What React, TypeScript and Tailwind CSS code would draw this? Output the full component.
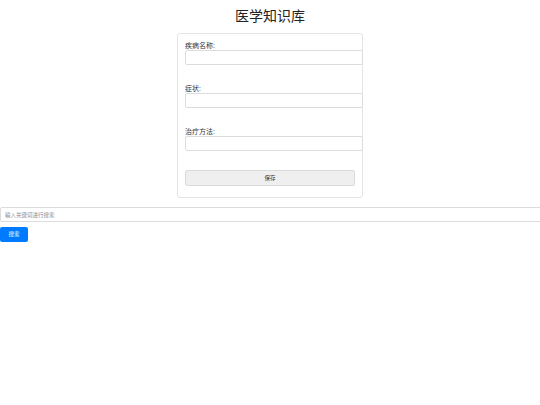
export default function App() {
  const fields = ["疾病名称:", "症状:", "治疗方法:"];

  return (
    <div className="min-h-[405px] overflow-hidden bg-white text-[#333] font-['Liberation_Sans','Noto_Sans_CJK_SC',sans-serif]">
      <h1 className="pt-[8px] text-center text-[14px] leading-[16px] font-normal text-[#222]">医学知识库</h1>

      <div className="mx-auto mt-[9px] w-[186px] rounded-[3px] border border-[#e4e4e4] px-[7px] pt-[7px] pb-[11px]">
        {fields.map((label, index) => (
          <div key={label} className={index === 0 ? "" : "mt-[19px]"}>
            <label className="block text-[7px] leading-[9px] text-[#333]">{label}</label>
            <input
              className="block h-[15px] w-[178px] rounded-[2px] border border-[#dcdcdc] bg-white px-[4px] text-[6px] outline-none"
              type="text"
            />
          </div>
        ))}
        <button
          className="mt-[19px] block h-[16px] w-full rounded-[2px] border border-[#dadada] bg-[#efefef] text-[5.5px] leading-[14px] text-[#333]"
          type="button"
        >
          保存
        </button>
      </div>

      <input
        className="mt-[9px] block h-[15px] w-[calc(100%+8px)] rounded-[2px] border border-[#dcdcdc] bg-white px-[4px] text-[5.5px] text-[#333] outline-none placeholder:text-[#8a8a8a]"
        type="text"
        placeholder="输入关键词进行搜索"
      />
      <button
        className="mt-[5px] block h-[15px] w-[28px] rounded-[2px] bg-[#007bff] text-[5.5px] leading-[15px] text-white"
        type="button"
      >
        搜索
      </button>
    </div>
  );
}
